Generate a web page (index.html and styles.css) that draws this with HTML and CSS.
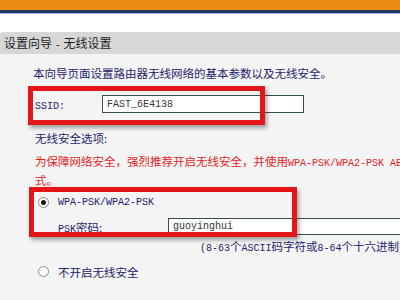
FILE: index.html
```html
<!DOCTYPE html>
<html lang="zh-CN">
<head>
  <meta charset="UTF-8" />
  <title>设置向导 - 无线设置</title>
  <link rel="stylesheet" href="styles.css">
</head>
<body>

  <div class="topbar"></div>
  <div class="topline"></div>
  <div class="gap"></div>

  <div class="title">设置向导 <span class="en">-</span> 无线设置</div>

  <div class="content">
    <p class="intro">本向导页面设置路由器无线网络的基本参数以及无线安全。</p>

    <div class="row ssid-row">
      <label class="ssid-label"><span class="en">SSID:</span></label>
      <input type="text" class="field ssid-field" value="FAST_6E4138" />
    </div>

    <p class="options">无线安全选项:</p>
    <p class="warn">为保障网络安全，强烈推荐开启无线安全，并使用<span class="en">WPA-PSK/WPA2-PSK AES</span>加密方<br>式。</p>

    <div class="row radio-row first">
      <input type="radio" name="sec" class="radio" checked />
      <span class="en">WPA-PSK/WPA2-PSK</span>
    </div>

    <div class="row psk-row">
      <label class="psk-label"><span class="en">PSK</span>密码:</label>
      <input type="text" class="field psk-field" value="guoyinghui" />
    </div>

    <p class="hint"><span class="en">(8-63</span>个<span class="en">ASCII</span>码字符或<span class="en">8-64</span>个十六进制字符<span class="en">)</span></p>

    <div class="row radio-row second">
      <input type="radio" name="sec" class="radio" />
      <span>不开启无线安全</span>
    </div>

    <!-- annotation boxes -->
    <div class="mark mark-ssid"></div>
    <div class="mark mark-psk"></div>
  </div>

</body>
</html>
```

FILE: styles.css
```css
body {
  margin: 0;
  width: 400px;
  height: 300px;
  overflow: hidden;
  background: #fff;
  font-family: "Noto Sans CJK SC", "Noto Sans", sans-serif;
  font-size: 11.5px;
  color: #1c1c6c;
}

.en {
  font-family: "Liberation Mono", "DejaVu Sans Mono", monospace;
  font-size: 10px;
}

.topbar {
  height: 10px;
  background: #ed8a15;
  border-bottom: 3px solid #1f3768;
}

.topline {
  height: 1px;
  background: #9fb6da;
}

.gap {
  height: 18px;
}

.title {
  height: 22px;
  line-height: 22px;
  padding-left: 4px;
  background: #d7d7d7;
  color: #222;
  font-size: 12px;
  white-space: nowrap;
  border-top-left-radius: 3px;
}

.content {
  position: relative;
  height: 246px;
  background: #f4f4f4;
  padding-left: 34px;
  box-sizing: border-box;
  overflow: hidden;
  white-space: nowrap;
}

p {
  margin: 0;
  line-height: 17px;
}

.intro {
  padding-top: 11px;
  margin-left: -1px;
}

.row {
  display: flex;
  align-items: center;
}

.row > * {
  flex-shrink: 0;
}

.ssid-row {
  margin-top: 13px;
  height: 18px;
}

.ssid-label {
  width: 67px;
  padding-left: 1px;
}

.field {
  box-sizing: border-box;
  margin: 0;
  padding: 0 4px;
  border: 1px solid #34504e;
  background: #fff;
  font-family: "Liberation Mono", "DejaVu Sans Mono", monospace;
  font-size: 10px;
  color: #333;
  outline: none;
}

.ssid-field {
  width: 202px;
  height: 18px;
}

.options {
  margin-top: 17px;
  padding-left: 1px;
}

.warn {
  margin-top: 6px;
  padding-left: 1px;
  color: #e41d1d;
}

.radio-row {
  height: 17px;
  padding-left: 4px;
}

.radio-row.first {
  margin-top: 5px;
}

.radio-row.second {
  margin-top: 6px;
}

.radio {
  appearance: none;
  -webkit-appearance: none;
  box-sizing: border-box;
  width: 11px;
  height: 11px;
  margin: 0 9px 0 0;
  border: 1px solid #8a8a8a;
  border-radius: 50%;
  background: #fff;
  position: relative;
}

.radio:checked::after {
  content: "";
  position: absolute;
  left: 2px;
  top: 2px;
  width: 5px;
  height: 5px;
  border-radius: 50%;
  background: #111;
}

.psk-row {
  margin-top: 7px;
  height: 17px;
  padding-left: 24px;
}

.psk-label {
  width: 110px;
}

.psk-field {
  width: 240px;
  height: 17px;
}

.hint {
  margin-top: 3px;
  padding-left: 166px;
}

.mark {
  position: absolute;
  border: 5px solid #e3171a;
  box-shadow: 2px 3px 4px rgba(0, 0, 0, 0.35);
  box-sizing: border-box;
}

.mark-ssid {
  left: 28px;
  top: 32px;
  width: 237px;
  height: 39px;
}

.mark-psk {
  left: 29px;
  top: 133px;
  width: 268px;
  height: 50px;
}
```
